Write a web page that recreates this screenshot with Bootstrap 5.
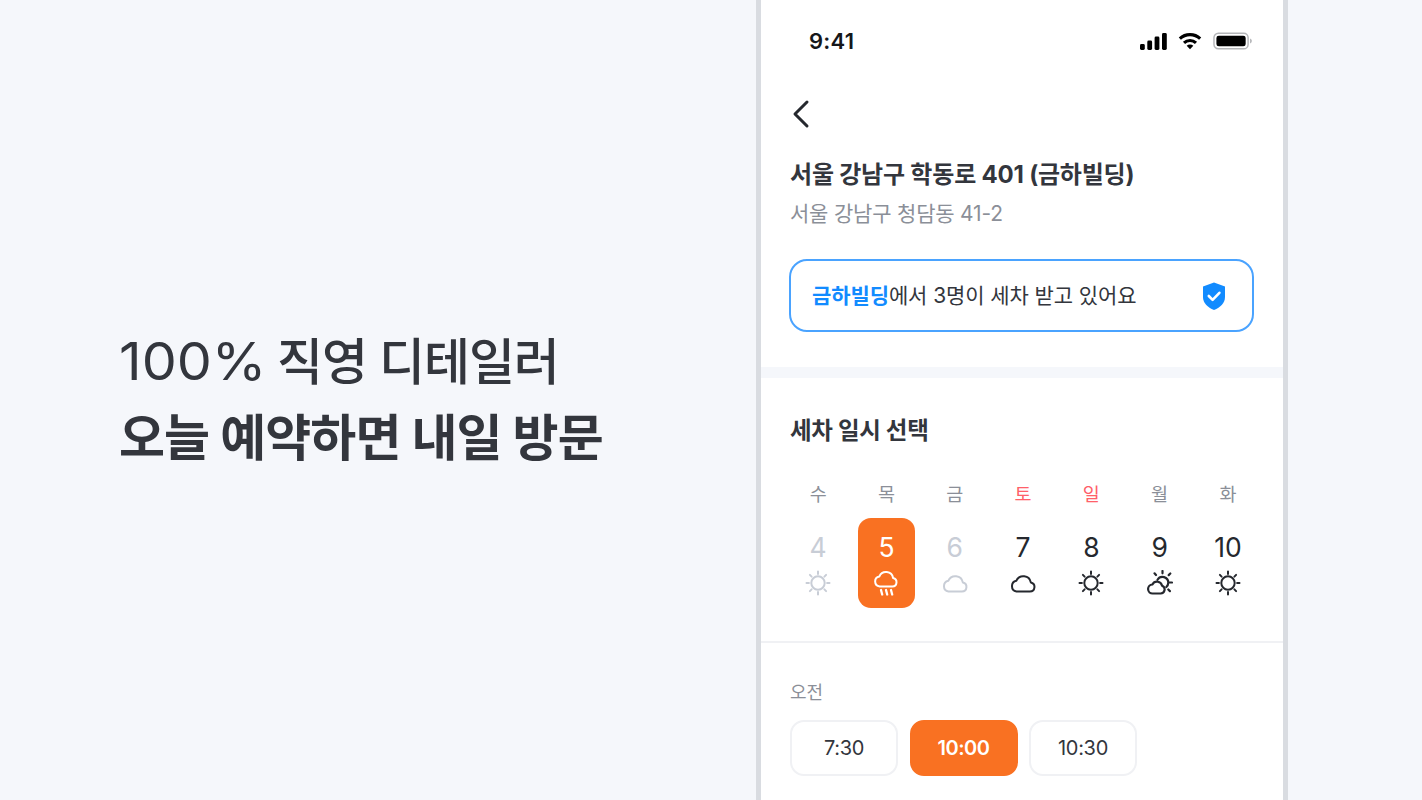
<!DOCTYPE html>
<html lang="ko"><head><meta charset="utf-8"><title>세차 예약</title>
<link rel="stylesheet" href="https://cdn.jsdelivr.net/npm/bootstrap@5.3.0/dist/css/bootstrap.min.css">
<style>
html,body{height:100%}
body{margin:0;background:#f5f7fb;font-family:Inter,"Noto Sans CJK KR",sans-serif;color:#33363d;overflow:hidden;height:800px}
.stage{height:800px}
.pitch{width:756px;padding-left:119px}
.pitch-line{font-size:50px;line-height:76px;letter-spacing:-1.1px;margin:0;font-weight:500}
.pitch-num{display:inline-block;font-size:52px;line-height:1;letter-spacing:0;font-weight:400;transform:scaleX(1.07);transform-origin:left center;margin-right:8px}
.pitch-strong{font-weight:700;letter-spacing:-.9px}
.phone{width:532px;height:800px;border-left:5px solid #d9dce1;border-right:5px solid #d9dce1;background:#fff;overflow:hidden}
.status{height:82px;padding:0 31px 0 48px}
.clock{font-size:22px;font-weight:600;color:#15171a;letter-spacing:.2px}
.status-wifi{margin-left:11px}
.status-batt{margin-left:11px}
.back{height:76px;padding:17px 0 0 28px}
.addr{padding:0 29px}
.addr-title{font-size:24px;font-weight:700;line-height:34px;letter-spacing:-.2px;margin:0}
.addr-sub{font-size:21px;line-height:30px;margin:7px 0 0;color:#8b8f98;letter-spacing:-.2px}
.notice{margin:30px 29px 35px 28px;height:73px;border:2px solid #4aa3ff;border-radius:18px;padding:0 26px 0 21px;font-size:21px;letter-spacing:-.1px}
.notice b{color:#128bff;font-weight:700}
.band{height:11px;background:#f5f7fb}
.pick{padding:37px 29px 0}
.pick-title{font-size:23.5px;font-weight:700;line-height:32px;margin:0 0 32px;letter-spacing:-.3px}
.week{display:grid;grid-template-columns:repeat(7,56.3px);column-gap:12px}
.wd{text-align:center;font-size:18.5px;line-height:30px;color:#8b8f98}
.wd.red{color:#ff6069}
.day{height:90px;margin-top:9px;border-radius:13px;padding-top:12px;text-align:center;font-size:26.5px;line-height:34px;color:#25282e}
.day svg{display:block;margin:6px auto 0;width:26px;height:26px}
.day.past{color:#c8cdd6}
.day.on{background:#f97122;color:#fff}
.rule{height:2px;background:#f0f1f4;margin-top:33px}
.am{padding:35px 29px 0}
.am-label{font-size:18px;line-height:30px;color:#8b8f98;margin:0 0 12px}
.slot{width:108px;height:56px;padding:0;border:2px solid #f0f1f4;border-radius:14px;background:#fff;font-size:20px;color:#33363d;letter-spacing:-.3px}
.slot.on{background:#f97122;border-color:#f97122;color:#fff;font-weight:600;letter-spacing:-.5px}
.slots{gap:11.5px}
</style></head>
<body>
<svg width="0" height="0" class="position-absolute"><defs>
<g id="sun" fill="none" stroke="currentColor" stroke-width="2" stroke-linecap="round"><circle cx="13" cy="13" r="6.700"/><path d="M13 1.500v2.400M13 22.100v2.400M1.500 13h2.400M22.100 13h2.400M4.900 4.900l1.700 1.700M19.400 19.400l1.700 1.700M4.900 21.100l1.700-1.700M19.400 6.600l1.700-1.700"/></g>
<path id="cloud" fill="none" stroke="currentColor" stroke-width="2" stroke-linejoin="round" d="M6.500 21.500h13.400a4.600 4.600 0 0 0 .9-9.100 7.600 7.600 0 0 0-14.400-1.700A5.500 5.500 0 0 0 6.500 21.500z"/>
<g id="rain" fill="none" stroke="currentColor" stroke-width="2" stroke-linecap="round" stroke-linejoin="round"><path d="M6.700 16.500h12.700a4.300 4.300 0 0 0 .7-8.500 7.200 7.200 0 0 0-13.700-1.600 5.100 5.100 0 0 0 .3 10.100z"/><path d="M8 20l1.200 4.500M13 20l1.200 4.500M18 20l1.200 4.500" stroke-width="2.300"/></g>
<g id="partly" fill="none" stroke="currentColor" stroke-width="2.200" stroke-linecap="round" stroke-linejoin="round"><path d="M15.500 1v2.300M25 12.500h-2.400M7.500 3.300l1.500 1.700M23.300 3.500l-1.600 1.600M21.300 19.500l1.600 1.600"/><path d="M10.500 9.800a5.800 5.800 0 0 1 10.800 3 5.800 5.800 0 0 1-2 4.200"/><path d="M5.800 23.500h7.700a4 4 0 0 0 1.600-7.700 5.200 5.200 0 0 0-9.700-1.300 4.500 4.500 0 0 0 .4 9z"/></g>
</defs></svg>
<main class="stage d-flex">
<section class="pitch d-flex flex-column justify-content-center">
<p class="pitch-line"><span class="pitch-num">100%</span> 직영 디테일러</p>
<p class="pitch-line pitch-strong">오늘 예약하면 내일 방문</p>
</section>
<section class="phone flex-shrink-0">
<div class="status d-flex align-items-center justify-content-between">
<span class="clock">9:41</span>
<span class="d-flex align-items-center">
<svg width="27" height="17" viewBox="0 0 27 17" fill="#000"><rect x="0" y="11" width="4.800" height="6" rx="1.400"/><rect x="7.300" y="7.500" width="4.800" height="9.500" rx="1.400"/><rect x="14.600" y="3.500" width="4.800" height="13.500" rx="1.400"/><rect x="22" y="0" width="4.800" height="17" rx="1.400"/></svg>
<svg class="status-wifi" width="24" height="18" viewBox="0 0 26 18" fill="none" stroke="#000" stroke-width="3.400"><path d="M2 6.500a16 16 0 0 1 22 0"/><path d="M6.500 11a9.500 9.500 0 0 1 13 0"/><path d="M13 18l-3.600-3.800a5 5 0 0 1 7.200 0z" fill="#000" stroke="none"/></svg>
<svg class="status-batt" width="39" height="18" viewBox="0 0 40 18" fill="none"><rect x="1" y="1" width="35" height="16" rx="4.500" stroke="#b4b5b8" stroke-width="1.500"/><rect x="3.500" y="3.500" width="30" height="11" rx="2.500" fill="#000"/><path d="M38 6.500c1.200.4 1.800 1.300 1.800 2.500s-.6 2.100-1.800 2.500z" fill="#b4b5b8"/></svg>
</span>
</div>
<div class="back d-flex align-items-start"><svg width="24" height="30" viewBox="0 0 24 30" fill="none" stroke="#25282e" stroke-width="3" stroke-linecap="round" stroke-linejoin="round"><path d="M18 3L6 15l12 12"/></svg></div>
<div class="addr">
<h1 class="addr-title">서울 강남구 학동로 401 (금하빌딩)</h1>
<p class="addr-sub">서울 강남구 청담동 41-2</p>
</div>
<div class="notice d-flex align-items-center justify-content-between">
<span><b>금하빌딩</b>에서 3명이 세차 받고 있어요</span>
<svg width="24" height="30" viewBox="0 0 24 30"><path d="M12 1.500l11 4v10.500c0 6-4.500 10.500-11 13C5.500 26.500 1 22 1 16V5.500z" fill="#128bff"/><path d="M6.800 15l3.800 3.800 6.800-7" fill="none" stroke="#fff" stroke-width="2.600" stroke-linecap="round" stroke-linejoin="round"/></svg>
</div>
<div class="band"></div>
<div class="pick">
<h2 class="pick-title">세차 일시 선택</h2>
<div class="week">
<div class="wd">수</div><div class="wd">목</div><div class="wd">금</div><div class="wd red">토</div><div class="wd red">일</div><div class="wd">월</div><div class="wd">화</div>
<div class="day past">4<svg viewBox="0 0 26 26"><use href="#sun"/></svg></div>
<div class="day on">5<svg viewBox="0 0 26 26"><use href="#rain"/></svg></div>
<div class="day past">6<svg viewBox="0 0 26 26"><use href="#cloud"/></svg></div>
<div class="day">7<svg viewBox="0 0 26 26"><use href="#cloud"/></svg></div>
<div class="day">8<svg viewBox="0 0 26 26"><use href="#sun"/></svg></div>
<div class="day">9<svg viewBox="0 0 26 26"><use href="#partly"/></svg></div>
<div class="day">10<svg viewBox="0 0 26 26"><use href="#sun"/></svg></div>
</div>
</div>
<div class="rule"></div>
<div class="am">
<p class="am-label">오전</p>
<div class="slots d-flex">
<button type="button" class="btn slot">7:30</button>
<button type="button" class="btn slot on">10:00</button>
<button type="button" class="btn slot">10:30</button>
</div>
</div>
</section>
</main>
</body></html>
